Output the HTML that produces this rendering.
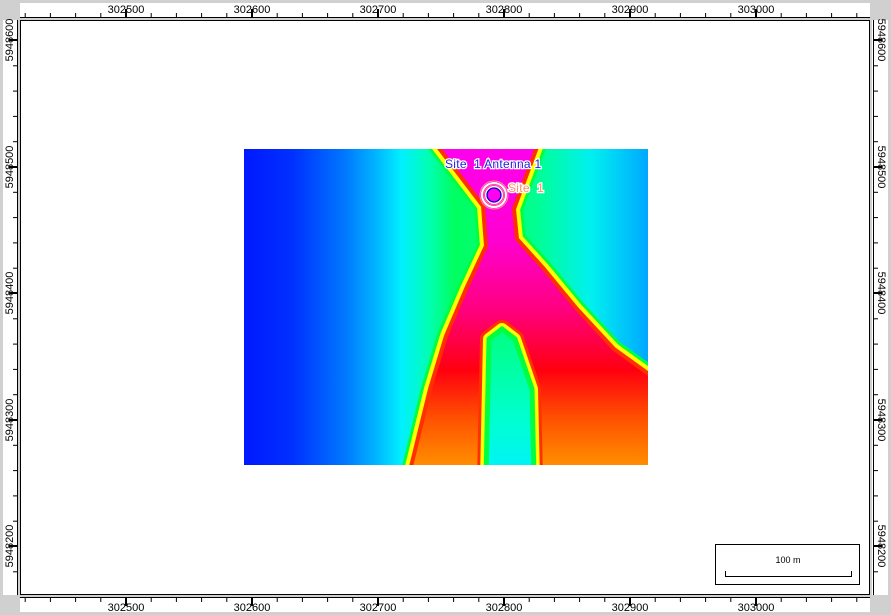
<!DOCTYPE html>
<html><head><meta charset="utf-8"><style>
html,body{margin:0;padding:0;background:#d0d0d0;}
svg{display:block;font-family:"Liberation Sans",sans-serif;}
</style></head><body>
<svg width="891" height="615" viewBox="0 0 891 615" xmlns="http://www.w3.org/2000/svg">
<defs>
<pattern id="hp" x="24.7" y="0" width="25.2" height="615" patternUnits="userSpaceOnUse"><rect x="0" y="0" width="1" height="615" fill="#000"/></pattern>
<pattern id="vp" x="0" y="14.7" width="891" height="25.3" patternUnits="userSpaceOnUse"><rect x="0" y="0" width="891" height="1" fill="#000"/></pattern>
<linearGradient id="bg" x1="0" y1="0" x2="1" y2="0">
<stop offset="0" stop-color="#0018ff"/><stop offset="0.12" stop-color="#0030ff"/>
<stop offset="0.25" stop-color="#0078ff"/><stop offset="0.33" stop-color="#00b8ff"/>
<stop offset="0.39" stop-color="#00f0ff"/><stop offset="0.46" stop-color="#00ffb0"/>
<stop offset="0.52" stop-color="#00ff60"/><stop offset="0.72" stop-color="#00ff90"/>
<stop offset="0.86" stop-color="#00f0f0"/><stop offset="1" stop-color="#00a8ff"/>
</linearGradient>
<linearGradient id="hot" x1="0" y1="0" x2="0" y2="1">
<stop offset="0" stop-color="#ff00f0"/><stop offset="0.3" stop-color="#ff00d0"/>
<stop offset="0.5" stop-color="#ff0080"/><stop offset="0.68" stop-color="#ff0010"/>
<stop offset="0.82" stop-color="#ff5000"/><stop offset="1" stop-color="#ffa000"/>
</linearGradient>
<linearGradient id="cy" x1="0" y1="0" x2="0" y2="1">
<stop offset="0" stop-color="#00ff80"/><stop offset="0.6" stop-color="#00ffd0"/><stop offset="1" stop-color="#00f0ff"/>
</linearGradient>
<clipPath id="hc"><rect x="0" y="0" width="404" height="316"/></clipPath>
</defs>

<rect x="20" y="3" width="850" height="14" fill="#fff"/>
<rect x="22" y="13" width="846" height="4" fill="url(#hp)"/>
<rect x="20" y="17" width="850" height="1" fill="#000"/>
<g fill="#000"><rect x="125" y="9" width="2" height="8"/><rect x="251" y="9" width="2" height="8"/><rect x="377" y="9" width="2" height="8"/><rect x="503" y="9" width="2" height="8"/><rect x="629" y="9" width="2" height="8"/><rect x="755" y="9" width="2" height="8"/></g>
<g font-size="11" text-anchor="middle" fill="#000">
<text x="126" y="13">302500</text><text x="252" y="13">302600</text><text x="378" y="13">302700</text><text x="504" y="13">302800</text><text x="630" y="13">302900</text><text x="756" y="13">303000</text>
</g>

<rect x="20" y="597" width="850" height="15" fill="#fff"/>
<rect x="20" y="597" width="850" height="1" fill="#000"/>
<rect x="22" y="598" width="846" height="4" fill="url(#hp)"/>
<g fill="#000"><rect x="125" y="598" width="2" height="8"/><rect x="251" y="598" width="2" height="8"/><rect x="377" y="598" width="2" height="8"/><rect x="503" y="598" width="2" height="8"/><rect x="629" y="598" width="2" height="8"/><rect x="755" y="598" width="2" height="8"/></g>
<g font-size="11" text-anchor="middle" fill="#000">
<text x="126" y="611">302500</text><text x="252" y="611">302600</text><text x="378" y="611">302700</text><text x="504" y="611">302800</text><text x="630" y="611">302900</text><text x="756" y="611">303000</text>
</g>

<rect x="3" y="20" width="15" height="575" fill="#fff"/>
<rect x="17" y="20" width="1" height="575" fill="#000"/>
<rect x="13" y="22" width="4" height="571" fill="url(#vp)"/>
<g fill="#000"><rect x="9" y="39" width="8" height="2"/><rect x="9" y="166" width="8" height="2"/><rect x="9" y="292" width="8" height="2"/><rect x="9" y="419" width="8" height="2"/><rect x="9" y="545" width="8" height="2"/></g>
<g font-size="11" text-anchor="middle" fill="#000">
<text transform="translate(13,40) rotate(-90)">5948600</text>
<text transform="translate(13,167) rotate(-90)">5948500</text>
<text transform="translate(13,293) rotate(-90)">5948400</text>
<text transform="translate(13,420) rotate(-90)">5948300</text>
<text transform="translate(13,546) rotate(-90)">5948200</text>
</g>

<rect x="872" y="20" width="16" height="575" fill="#fff"/>
<rect x="873" y="20" width="1" height="575" fill="#000"/>
<rect x="874" y="22" width="4" height="571" fill="url(#vp)"/>
<g fill="#000"><rect x="874" y="39" width="8" height="2"/><rect x="874" y="166" width="8" height="2"/><rect x="874" y="292" width="8" height="2"/><rect x="874" y="419" width="8" height="2"/><rect x="874" y="545" width="8" height="2"/></g>
<g font-size="11" text-anchor="middle" fill="#000">
<text transform="translate(878,40) rotate(90)">5948600</text>
<text transform="translate(878,167) rotate(90)">5948500</text>
<text transform="translate(878,293) rotate(90)">5948400</text>
<text transform="translate(878,420) rotate(90)">5948300</text>
<text transform="translate(878,546) rotate(90)">5948200</text>
</g>

<rect x="20.5" y="20.5" width="849" height="574" fill="#fff" stroke="#000" stroke-width="1"/>

<g transform="translate(244,149)" clip-path="url(#hc)">
<rect x="0" y="0" width="404" height="316" fill="url(#bg)"/>
<g stroke-linejoin="round">
<polygon points="188,-10 239,57 242,97 222,140 202,187 186,240 164,330 420,330 420,236 370,200 333,160 300,120 273,90 270,60 296,-10" fill="none" stroke="#00ff40" stroke-width="18"/>
<polygon points="188,-10 239,57 242,97 222,140 202,187 186,240 164,330 420,330 420,236 370,200 333,160 300,120 273,90 270,60 296,-10" fill="none" stroke="#ffff00" stroke-width="12"/>
<polygon points="188,-10 239,57 242,97 222,140 202,187 186,240 164,330 420,330 420,236 370,200 333,160 300,120 273,90 270,60 296,-10" fill="url(#hot)" stroke="#ff3000" stroke-width="4"/>
<polygon points="242,330 245,190 258,180 271,190 288,240 290,330" fill="none" stroke="#ff3000" stroke-width="18"/>
<polygon points="242,330 245,190 258,180 271,190 288,240 290,330" fill="none" stroke="#ffff00" stroke-width="12"/>
<polygon points="242,330 245,190 258,180 271,190 288,240 290,330" fill="url(#cy)" stroke="#00ff40" stroke-width="5"/>
</g>
</g>

<circle cx="494" cy="195" r="14" fill="none" stroke="#ff9090" stroke-width="1"/>
<circle cx="494" cy="195" r="12" fill="none" stroke="#fff" stroke-width="2"/>
<circle cx="494" cy="195" r="10" fill="none" stroke="#ff8080" stroke-width="1"/>
<circle cx="494" cy="195" r="8" fill="#ff00f0" stroke="#fff" stroke-width="2"/>
<circle cx="494" cy="195" r="7" fill="none" stroke="#0000c0" stroke-width="1.3"/>
<g font-size="12">
<text x="445" y="168" fill="#2020e0" stroke="#fff" stroke-width="2.5" paint-order="stroke" letter-spacing="0.3" xml:space="preserve">Site  1 Antenna 1</text>
<text x="508" y="192" fill="#ff9060" stroke="#fff" stroke-width="2.5" paint-order="stroke" letter-spacing="0.3" xml:space="preserve">Site  1</text>
</g>

<rect x="715.5" y="544.5" width="144" height="40" fill="#fff" stroke="#000" stroke-width="1"/>
<text x="788" y="563" font-size="9" text-anchor="middle" fill="#000">100 m</text>
<path d="M725.5 571 V576.5 H851.5 V571" fill="none" stroke="#000" stroke-width="1"/>
</svg>
</body></html>
